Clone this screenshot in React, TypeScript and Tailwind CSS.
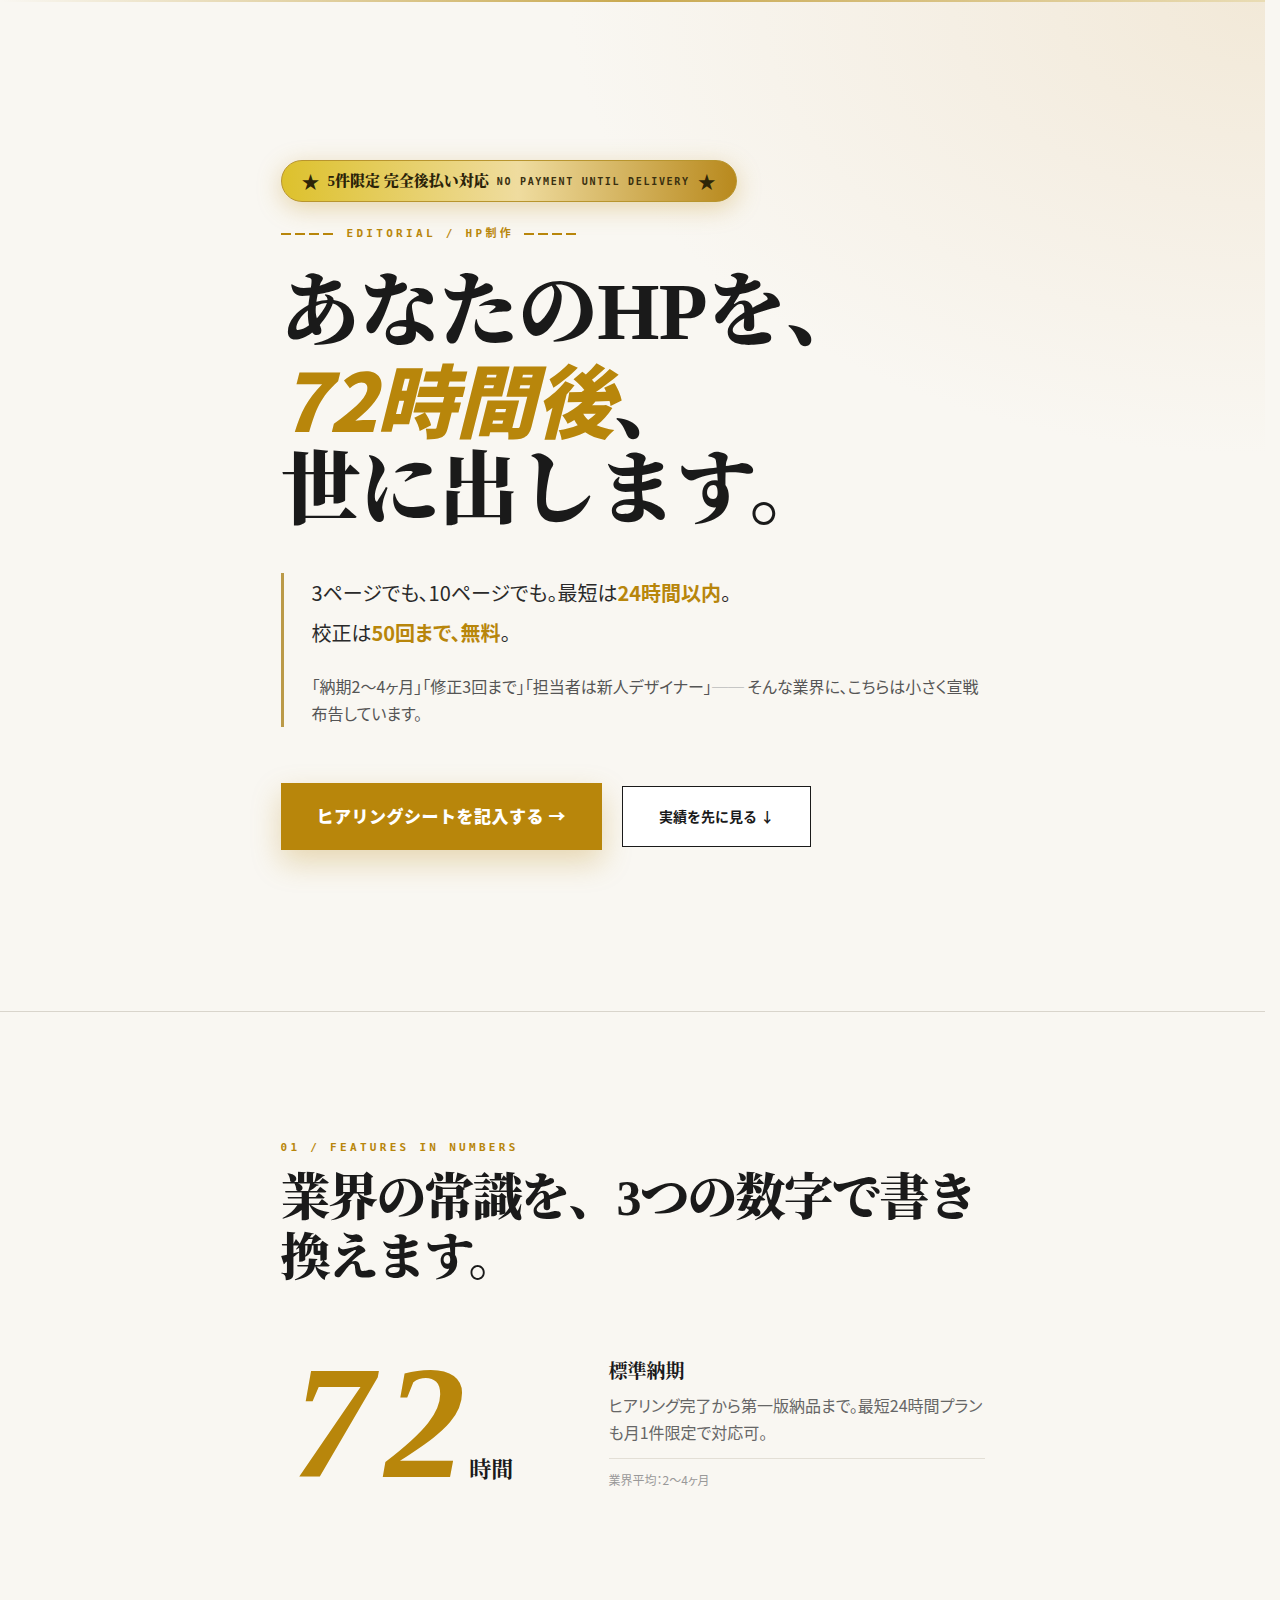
const serif = "font-['Liberation_Serif','Noto_Serif_CJK_JP',serif]";
const mono = "font-['DejaVu_Sans_Mono','Noto_Sans_CJK_JP',monospace]";

function Dashes() {
  return (
    <span className="inline-flex gap-1 align-middle">
      <span className="h-[2px] w-[10px] bg-[#b8860b]" />
      <span className="h-[2px] w-[10px] bg-[#b8860b]" />
      <span className="h-[2px] w-[10px] bg-[#b8860b]" />
      <span className="h-[2px] w-[10px] bg-[#b8860b]" />
    </span>
  );
}

function Badge() {
  return (
    <div className="inline-flex h-[42px] items-center gap-2 rounded-full border border-[#b8952e] bg-[linear-gradient(90deg,#ddc12c_0%,#efdc9f_52%,#b8891d_100%)] px-5 shadow-[0_6px_24px_rgba(196,150,40,0.35)]">
      <span className="text-[18px] leading-none text-[#2e2508]">★</span>
      <span className={`${serif} text-[15px] font-black text-[#2a2208]`}>5件限定 完全後払い対応</span>
      <span className={`${mono} text-[10px] font-bold tracking-[0.17em] text-[#3a3010]`}>
        NO PAYMENT UNTIL DELIVERY
      </span>
      <span className="text-[18px] leading-none text-[#2e2508]">★</span>
    </div>
  );
}

function Hero() {
  return (
    <section className="border-b border-[#d9d5cc] bg-[radial-gradient(ellipse_55%_45%_at_100%_0%,#f2e9d8_0%,#f5efe4_45%,rgba(249,247,242,0)_100%)]">
      <div className="h-[2px] bg-linear-to-r from-transparent via-[#c9a94f] to-[#e9dcb4]" />
      <div className="mx-auto max-w-3xl px-8 pt-[158px] pb-[161px]">
        <Badge />
        <p className={`${mono} mt-6 flex items-center gap-[14px] text-[11px] font-bold tracking-[0.3em] text-[#b8860b]`}>
          <Dashes />
          <span className="-mr-[4px]">EDITORIAL / HP制作</span>
          <Dashes />
        </p>

        <h1 className={`${serif} mt-[27px] text-[80px] font-black leading-[85px] tracking-[-0.01em] text-[#1a1a1a]`}>
          あなたのHPを、
          <br />
          <span className="font-['Noto_Sans_CJK_JP',sans-serif] font-black italic text-[#b8860b]">72時間後</span>、
          <br />
          世に出します。
        </h1>

        <div className="mt-10 border-l-[3px] border-[#bb9a48] pl-7 [font-feature-settings:'palt']">
          <p className="text-[20px] leading-[40px] text-[#2a2a2a]">
            3ページでも、10ページでも。最短は<strong className="font-bold text-[#b8860b]">24時間以内</strong>。
          </p>
          <p className="text-[20px] leading-[40px] text-[#2a2a2a]">
            校正は<strong className="font-bold text-[#b8860b]">50回まで、無料</strong>。
          </p>
          <p className="mt-5 text-[16px] leading-[27px] text-[#555]">
            「納期2〜4ヶ月」「修正3回まで」「担当者は新人デザイナー」<span className="text-[#bbb]">──</span> そんな業界に、こちらは小さく宣戦布告しています。
          </p>
        </div>

        <div className="mt-14 flex items-center gap-5">
          <a className="flex h-[67px] items-center bg-[#b8860b] px-9 text-[17px] font-black tracking-[0.03em] text-white shadow-[0_12px_30px_rgba(184,134,11,0.28)]">
            ヒアリングシートを記入する →
          </a>
          <a className="flex h-[61px] items-center border border-[#1a1a1a] bg-white px-9 text-[14px] font-bold text-[#1a1a1a]">
            実績を先に見る ↓
          </a>
        </div>
      </div>
    </section>
  );
}

function Features() {
  return (
    <section className="mx-auto max-w-3xl px-8 pt-32 pb-[220px]">
      <p className={`${mono} text-[11px] font-bold tracking-[0.3em] text-[#b8860b]`}>01 / FEATURES IN NUMBERS</p>
      <h2 className={`${serif} mt-3 text-[50px] font-black leading-[60px] tracking-[-0.04em] text-[#1a1a1a]`}>
        業界の常識を、3つの数字で書き換えます。
      </h2>

      <div className="mt-[54px] grid grid-cols-[280px_1fr] items-center gap-12">
        <div className="flex items-baseline pl-3">
          <span className={`${serif} text-[162px] font-bold italic leading-none tracking-[0.07em] text-[#b8860b]`}>72</span>
          <span className={`${serif} -ml-2 text-[22px] font-bold text-[#1a1a1a]`}>時間</span>
        </div>
        <div className="[font-feature-settings:'palt']">
          <h3 className={`${serif} text-[19px] font-bold leading-[28px] text-[#1a1a1a]`}>標準納期</h3>
          <p className="mt-1.5 text-[16px] leading-[27px] text-[#666]">
            ヒアリング完了から第一版納品まで。最短24時間プランも月1件限定で対応可。
          </p>
          <p className="mt-3 border-t border-[#e3dfd6] pt-3 text-[12px] text-[#999]">業界平均：2〜4ヶ月</p>
        </div>
      </div>
    </section>
  );
}

export default function App() {
  return (
    <div className="min-h-screen bg-[#f9f7f2] pr-[15px] font-['Noto_Sans_CJK_JP',sans-serif] text-[#1a1a1a]">
      <Hero />
      <Features />
    </div>
  );
}
